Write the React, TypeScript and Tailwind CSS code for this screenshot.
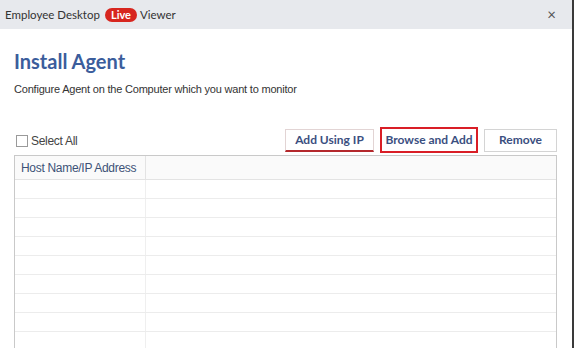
export default function App() {
  const rows = Array.from({ length: 9 });

  return (
    <div className="w-[574px] h-[348px] overflow-hidden bg-white flex flex-col border-r-2 border-[#3a3a3a] font-['Lato',sans-serif]">
      {/* Title bar */}
      <div className="h-[29px] shrink-0 bg-[#e7e9ed] flex items-center pl-[5px] pr-[16px] text-[11.5px] text-[#333]">
        <span>Employee Desktop</span>
        <span className="ml-[5px] mr-[3px] h-[14px] px-[6px] rounded-full bg-[#d7261f] text-white text-[11px] font-bold leading-[14px]">
          Live
        </span>
        <span>Viewer</span>
        <span className="ml-auto text-[15px] text-[#555] leading-none">×</span>
      </div>

      {/* Body */}
      <div className="flex-1 flex flex-col pl-[14px] pr-[15px]">
        <h1 className="mt-[20px] text-[20px] leading-[24px] font-bold text-[#3b5d9c]">Install Agent</h1>
        <p className="mt-[9px] text-[11px] leading-[14px] text-[#333] font-['Liberation_Sans',sans-serif] tracking-[-0.2px]">
          Configure Agent on the Computer which you want to monitor
        </p>

        {/* Toolbar */}
        <div className="mt-[31px] flex items-end">
          <label className="ml-[2px] mb-[3px] flex items-center gap-[3px] text-[12px] text-[#444] font-['Liberation_Sans',sans-serif] tracking-[-0.3px]">
            <span className="w-[12px] h-[12px] border border-[#9a9a9a] bg-white" />
            Select All
          </label>
          <div className="ml-auto flex items-center gap-[6px]">
            <button className="w-[89px] h-[23px] border border-[#e2d4d4] border-b-2 border-b-[#b4282c] bg-white text-[12px] font-bold text-[#3b4f7f]">
              Add Using IP
            </button>
            <button className="w-[98px] h-[26px] border-2 border-[#d91e26] bg-white text-[12px] font-bold text-[#3b4f7f]">
              Browse and Add
            </button>
            <button className="w-[73px] h-[23px] border border-[#d4d4d4] bg-white text-[12px] font-bold text-[#3b4f7f]">
              Remove
            </button>
          </div>
        </div>

        {/* Grid */}
        <div className="mt-[2px] flex-1 border border-[#c9c9c9] border-b-0 flex flex-col">
          <div className="h-[24px] shrink-0 flex border-b border-[#e3e3e3] bg-[#fafafa]">
            <div className="w-[131px] border-r border-[#e3e3e3] pl-[6px] flex items-center text-[12px] text-[#3d5277] font-['Liberation_Sans',sans-serif] tracking-[-0.3px]">
              Host Name/IP Address
            </div>
            <div className="flex-1" />
          </div>
          {rows.map((_, i) => (
            <div key={i} className="h-[19px] shrink-0 flex border-b border-[#ececec]">
              <div className="w-[131px] border-r border-[#efefef]" />
              <div className="flex-1" />
            </div>
          ))}
        </div>
      </div>
    </div>
  );
}
